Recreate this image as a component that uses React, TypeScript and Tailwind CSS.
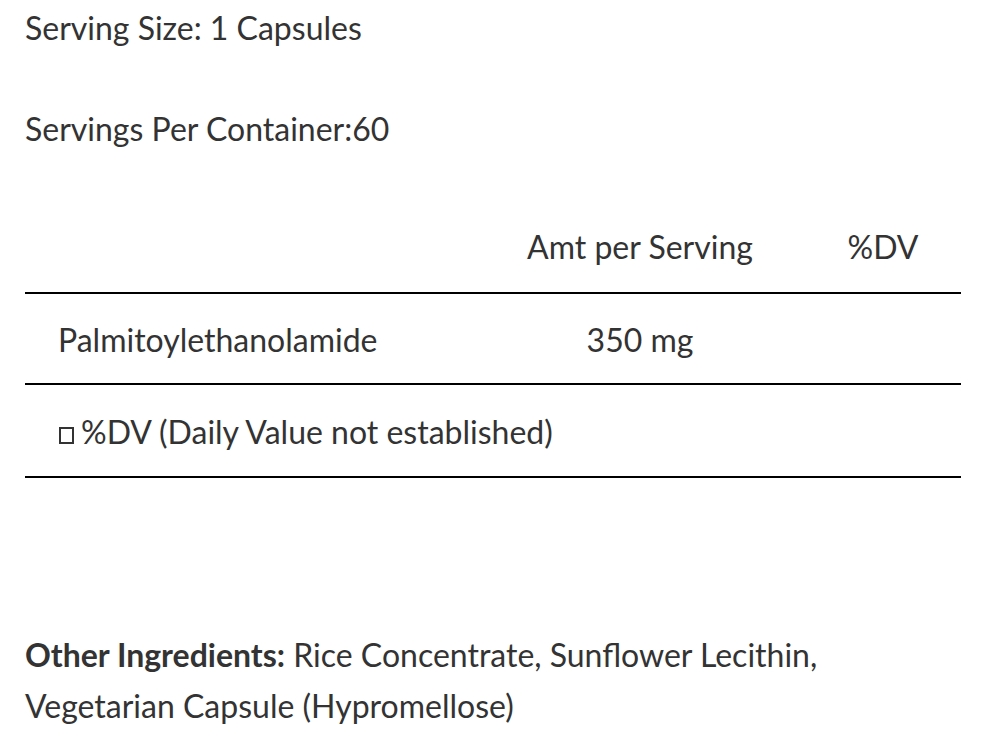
export default function App() {
  return (
    <div className="min-h-[754px] w-[986px] bg-white px-[25px] font-['Lato',sans-serif] text-[32px] text-[#333]">
      <p className="pt-[8px] leading-[40px]">Serving Size: 1 Capsules</p>
      <p className="mt-[61px] leading-[40px]">Servings Per Container:60</p>

      <div className="w-[936px]">
        <div className="mt-[78px] grid grid-cols-[450px_330px_1fr] border-b-2 border-black pb-[25px] leading-[40px]">
          <div />
          <div className="text-center">Amt per Serving</div>
          <div className="text-center">%DV</div>
        </div>
        <div className="grid grid-cols-[450px_330px_1fr] border-b-2 border-black pt-[26px] pb-[23px] leading-[40px]">
          <div className="pl-[33px]">Palmitoylethanolamide</div>
          <div className="text-center">350 mg</div>
          <div />
        </div>
        <div className="flex items-baseline border-b-2 border-black pt-[27px] pb-[24px] pl-[34px] leading-[40px]">
          <span className="mr-[7px] inline-block h-[17px] w-[15px] border-2 border-[#333]" />
          <span>%DV (Daily Value not established)</span>
        </div>
      </div>

      <p className="mt-[151px] leading-[51px]">
        <span className="font-bold">Other Ingredients:</span> Rice Concentrate, Sunflower Lecithin,
        <br />
        Vegetarian Capsule (Hypromellose)
      </p>
    </div>
  );
}
